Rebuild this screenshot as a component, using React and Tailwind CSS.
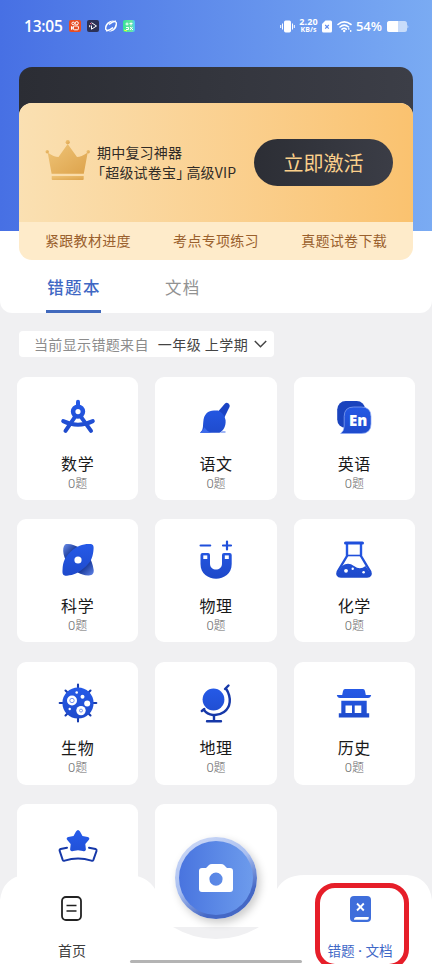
import React from "react";

const G = "url(#blue)";
const B = "#1f4fdb";
const N = "#1638a8";

const icons = {
  compass: (
    <g fill="none" stroke={G} strokeWidth="4" strokeLinecap="round" transform="translate(0 -1.7)">
      <path d="M20 9.500V14" />
      <circle cx="20" cy="19.300" r="4.900" strokeWidth="4.600" />
      <path d="M17 24.500L7.500 38.500M23 24.500L33 38.500" />
      <path d="M5.200 28.800Q20 36 34.800 28.800" />
    </g>
  ),
  brush: (
    <g transform="translate(0 1.2)">
      <path d="M24 37.500h5.500v-1.500h-3z" fill="#7f9df0" />
      <path d="M21 17.500l7.800-9q1.700-1.600 3.600-.3t1.200 3.300L28.500 22z" fill="#1a43c4" />
      <path d="M4 37.500C7.500 34.500 6.800 31 7.300 26.500C7.800 19 12 15.200 18 15.200h4Q28.500 18 29.600 25C30 31 27.500 35.500 23.500 37.500z" fill={G} />
      <path d="M4 37.500C6.500 35 7.500 34.500 8.500 32Q11 36.500 16 37.500z" fill="#3b69ec" />
    </g>
  ),
  english: (
    <g transform="translate(1.2 1)">
      <rect x="2" y="6" width="28" height="27" rx="8.500" fill="#1a43bd" />
      <path d="M5.500 38.500Q9 36 9 31V21.500Q9 12 18.500 12h7.500Q35.800 12 35.800 21.500v7.500Q35.800 38.500 26 38.500z" fill={G} stroke="#8eaaf5" strokeWidth=".7" />
      <text x="23" y="31.300" textAnchor="middle" fontSize="15" fontWeight="800" fill="#fff" className="font-['Open_Sans',sans-serif]">En</text>
    </g>
  ),
  science: (
    <g>
      <path d="M7 8.500C11 7 17 9 22 12C29 17 34 22 35.700 34C36 38 34 39.700 30 39.400C22 39 18 36 12 30C5 23 3.500 12 7 8.500z" fill="url(#deep)" />
      <path d="M31 8C35.700 7.700 36 10 35.400 15C34.500 23 32 27 26 32C20 37 16 39 9 39.700C5 40 4.200 38 4.500 34C5 25 7 21 13 15.500C19 10 24 8 31 8z" fill={G} />
      <circle cx="20" cy="24" r="3.600" fill="#fff" />
    </g>
  ),
  magnet: (
    <g>
      <path d="M4.600 9.500h9.600M31 5.500v8M27 9.500h8" stroke={B} strokeWidth="2.200" strokeLinecap="round" fill="none" />
      <path d="M4.500 19q0-2 2-2h5.500q2 0 2 2v8.500c0 8 12 8 12 0V19q0-2 2-2h5.700q2 0 2 2v9C35.700 47.500 4.500 47.500 4.500 28z" fill={G} />
      <rect x="7.300" y="19.400" width="4" height="3.600" fill="#fff" />
      <rect x="28.800" y="19.400" width="4" height="3.600" fill="#fff" />
    </g>
  ),
  flask: (
    <g>
      <path d="M13 8v12L3.800 35.500Q2.200 40 7 40.500h26Q37.800 40 36.200 35.500L27 20V8" fill="#fff" stroke={G} strokeWidth="2.400" />
      <path d="M11.500 7h17" stroke={B} strokeWidth="3" strokeLinecap="round" />
      <path d="M13 19.500h14" stroke={B} strokeWidth="1.600" />
      <path d="M8 30Q14 25.500 20 30T31.500 30L36 36.500Q37 41 33 41H7Q3 41 4 36.500z" fill={G} />
      <circle cx="12" cy="34.800" r="1.900" fill="#fff" />
      <circle cx="18.700" cy="32.800" r="1.200" fill="#fff" />
      <circle cx="29.600" cy="36.300" r="1.300" fill="#fff" />
    </g>
  ),
  cell: (
    <g>
      <path d="M20 5.500v37M1.700 24h36.600M7.500 11.500l25 25M32.500 11.500l-25 25" stroke="#173caf" strokeWidth="2.100" strokeLinecap="round" />
      <circle cx="20" cy="24" r="15.600" fill={G} />
      <circle cx="14" cy="21.500" r="5" fill="#fff" />
      <circle cx="14" cy="21.500" r="2.200" fill="#fff" stroke="#6689ed" strokeWidth=".9" />
      <circle cx="23" cy="31.600" r="4.700" fill="#fff" />
      <circle cx="23" cy="31.600" r="1.500" fill="#fff" stroke="#6689ed" strokeWidth=".9" />
      <circle cx="29.200" cy="24.500" r="3" fill="#fff" />
      <circle cx="24.500" cy="17.700" r="2" fill="#fff" />
      <circle cx="18.700" cy="13.500" r="1.300" fill="#fff" />
      <circle cx="11.700" cy="30" r="1.200" fill="#fff" />
    </g>
  ),
  globe: (
    <g>
      <circle cx="17.500" cy="20.500" r="10.900" fill={G} />
      <path d="M32.500 6.500L29 10M30 9.500C36 19 34.500 28.500 28 33C21 38 12 36.500 8 31M5.800 32L8.300 30M18 37v5M11 42.200h14" stroke={N} strokeWidth="2.400" strokeLinecap="round" fill="none" />
    </g>
  ),
  temple: (
    <g fill={G}>
      <path d="M11 10h18q1.500 0 2 2l.8 4h5.400q-.7 3-3.200 3H6q-2.500 0-3.200-3h5.400l.8-4q.5-2 2-2z" />
      <path d="M7.300 21.700h25.400v12.500h2.500V38.500H4.800v-4.300h2.500z" />
      <path d="M11.500 26.500h6.500v7.500h-6.500zM20.700 26.500h6.600v7.500h-6.600z" fill="#fff" />
    </g>
  ),
  star: (
    <g>
      <path d="M9 22.700L2.700 24Q1.200 24.500 1.700 26l3 8.800q.6 1.300 2 .8Q20 31.500 33.400 35.600q1.400.5 2-.8L38.500 26q.4-1.500-1-2L31 22.700" fill="none" stroke={N} strokeWidth="2" strokeLinecap="round" />
      <path d="M18 6.500q2-3 4 0l2.500 4.500 5.200 1q2.800 1 .8 3.300l-3.200 3.700.6 5.500q-.4 2.500-3 1.500L20 25.300 15.100 26q-2.600 1-3-1.500l.6-5.500-3.200-3.700q-2-2.300.8-3.300l5.200-1z" fill={G} />
    </g>
  ),
};

function Icon({ name }) {
  return (
    <svg viewBox="0 0 40 46" className="h-[46px] w-10 shrink-0 overflow-visible">
      <defs>
        <linearGradient id="blue" gradientUnits="userSpaceOnUse" x1="0" y1="6" x2="0" y2="42">
          <stop offset="0" stopColor="#265bea" />
          <stop offset="1" stopColor="#1e49c9" />
        </linearGradient>
        <linearGradient id="deep" x1="0" y1="0" x2="1" y2="1">
          <stop offset="0" stopColor="#6c8eea" />
          <stop offset=".3" stopColor="#163696" />
          <stop offset=".7" stopColor="#163696" />
          <stop offset="1" stopColor="#6185eb" />
        </linearGradient>
      </defs>
      {icons[name]}
    </svg>
  );
}

const subjects = [
  ["数学", "compass"],
  ["语文", "brush"],
  ["英语", "english"],
  ["科学", "science"],
  ["物理", "magnet"],
  ["化学", "flask"],
  ["生物", "cell"],
  ["地理", "globe"],
  ["历史", "temple"],
];

function Subject({ title, icon }) {
  return (
    <div className="flex h-[123px] flex-col items-center rounded-[9px] bg-white pt-[17px]">
      <Icon name={icon} />
      <div className="mt-[10.500px] text-[16px] leading-6 tracking-[0.6px] text-[#191919]">{title}</div>
      <div className="mt-[1px] text-[12px] leading-[14px] font-light text-[#686868]"><span className="font-['Roboto'] text-[13px]">0</span>题</div>
    </div>
  );
}

function StatusBar() {
  return (
    <div className="flex h-[52px] items-center justify-between pr-[23px] pl-6 text-white">
      <div className="flex items-center gap-[6px]">
        <span className="mr-px w-[38px] font-['Open_Sans',sans-serif] text-[15.500px] leading-5 font-semibold tracking-[-0.2px] whitespace-nowrap">13:05</span>
        <svg className="size-3" viewBox="0 0 12 12">
          <rect width="12" height="12" rx="2" fill="#e74e24" />
          <g fill="none" stroke="#fff" strokeWidth="1">
            <circle cx="4.200" cy="3.400" r="1.300" /><circle cx="7.700" cy="3.200" r="1.600" />
            <rect x="4.400" y="6" width="5" height="3.800" rx="1" /><path d="M2.500 6.500v3l2-1.500z" />
          </g>
        </svg>
        <svg className="size-3" viewBox="0 0 12 12">
          <rect width="12" height="12" rx="2" fill="#2b3157" />
          <path d="M4.500 2.700L9.500 6l-5 3.200V5.500M2.700 5.200v2" fill="none" stroke="#fff" strokeWidth="1" />
          <path d="M3 3.200l1.500 1" stroke="#ff6d9a" />
        </svg>
        <svg className="size-3" viewBox="0 0 12 12">
          <path fill="#fff" d="M0 8C0 3 5 0 9 .5 6 1.500 2.300 4 1.500 7.500 1 9 1.800 9.500 2.500 9.200 0 12 0 9 0 8zM12 4c0 5-4 8-8.500 7.500C7 10.500 9.800 8 10.500 4.500 11 3 10.500 2.500 9.700 2.800 12 .5 12 3 12 4z" />
          <path d="M11 1.200Q8 1 4 4.500M1 10.700Q4 11 8 7.500" stroke="#fff" strokeWidth="1.500" fill="none" />
        </svg>
        <svg className="size-3" viewBox="0 0 12 12">
          <defs><linearGradient id="app"><stop stopColor="#36e398" /><stop offset=".7" stopColor="#68e5a2" /><stop offset="1" stopColor="#4ac4ff" /></linearGradient></defs>
          <rect width="12" height="12" rx="2" fill="url(#app)" />
          <path d="M2.500 4h3M4 2.500v3M6.500 3.500h3M8 2.500v3M3 7.500h2.500v2H3M7 7l3 3M9.500 7L7 10" stroke="#fff" fill="none" />
          <path d="M1 10L4 11" stroke="#f0ff3a" />
        </svg>
      </div>
      <div className="flex items-center">
        <svg className="mr-[4px] h-[13px] w-[15px]" viewBox="0 0 15 13"><rect x="4" y=".5" width="7" height="12" rx="1.700" fill="#fff" /><path d="M2.500 3.500v6M.7 5v3M12.500 3.500v6M14.300 5v3" stroke="#fff" strokeWidth="1" /></svg>
        <div className="w-[19px] text-center font-['Open_Sans',sans-serif] leading-[8px] font-bold tracking-[0.1px] whitespace-nowrap"><div className="text-[9px]">2.20</div><div className="text-[7px]">KB/s</div></div>
        <svg className="ml-[4px] h-[13px] w-[10px]" viewBox="0 0 10 13"><path d="M3.500.5H8.500q1.500 0 1.500 1.500v9q0 1.500-1.500 1.500h-7Q0 12.500 0 11V4z" fill="#fff" /><path d="M3.200 5l3.600 3.700M6.800 5L3.200 8.700" stroke="#5e8aed" strokeWidth="1.200" /></svg>
        <svg className="ml-[5px] h-[13px] w-[15px]" viewBox="0 0 15 13"><path d="M1 4.500Q7 -.7 14 4.500M3 7Q7.200 3.400 11.500 7M5 9.200Q7.200 7.300 9.200 9.200" fill="none" stroke="#fff" strokeWidth="1.600" strokeLinecap="round" /><circle cx="7.200" cy="11" r="1.200" fill="#fff" /><path d="M11.800 8v1.700M13.700 10v2" stroke="#fff" strokeWidth="1.200" /></svg>
        <span className="ml-[4px] w-[28px] font-['Open_Sans',sans-serif] text-[13px] leading-5 font-semibold tracking-[-0.1px]">54%</span>
        <svg className="ml-[3px] h-[11px] w-[22px]" viewBox="0 0 22 11"><rect width="20" height="11" rx="2.500" fill="#fff" opacity=".6" /><path d="M20.500 3.500q1.500 2 0 4z" fill="#fff" opacity=".7" /><path d="M2.500 0H11v11H2.500Q0 11 0 8.500v-6Q0 0 2.500 0z" fill="#fff" /></svg>
      </div>
    </div>
  );
}

function VipCard() {
  return (
    <div className="mx-[19px] mt-[15px] rounded-[13px] bg-[linear-gradient(90deg,#2b2d34,#3c3e47)] bg-[length:100%_100px] bg-no-repeat pt-9">
      <div className="overflow-hidden rounded-[13px] bg-[#feebca]">
        <div className="flex h-[119px] items-center bg-gradient-to-r from-[#fae0b2] to-[#fac26f] pr-5 pl-[26px]">
          <svg className="mb-[6px] h-[44px] w-[46px] shrink-0" viewBox="0 0 46 44">
            <defs><linearGradient id="crown" x1="0" y1="0" x2="1" y2="1"><stop stopColor="#efc477" /><stop offset="1" stopColor="#dda34c" /></linearGradient></defs>
            <g fill="url(#crown)">
              <circle cx="22.700" cy="4.200" r="2.100" /><circle cx="2.200" cy="13.800" r="1.700" /><circle cx="43.200" cy="13.800" r="1.700" />
              <path d="M2.700 14.500Q9 19 13.500 19L22.700 6L32 19Q36 19 42.700 14.500L38.800 35.700H6.600z" />
              <path d="M6.700 38h32v3q0 1-1 1h-30q-1 0-1-1z" />
            </g>
          </svg>
          <div className="mb-[1px] ml-[6px] grow text-[14px] leading-[20px] tracking-[0.2px] whitespace-nowrap text-[#302b26]">
            <div>期中复习神器</div>
            <div className="-ml-[6px] flex"><span>「超级试卷宝」</span><span className="-ml-[4px]">高级VIP</span></div>
          </div>
          <button className="h-[47px] w-[139px] shrink-0 rounded-full bg-gradient-to-r from-[#2c2e35] to-[#3b3d46] text-[20px] text-[#fbd08b]">立即激活</button>
        </div>
        <div className="flex h-[38px] items-center justify-between px-[26px] pb-px text-[14px] tracking-[0.3px] text-[#9a602d]">
          <span>紧跟教材进度</span><span>考点专项练习</span><span>真题试卷下载</span>
        </div>
      </div>
    </div>
  );
}

function BottomNav() {
  return (
    <nav className="absolute inset-x-0 bottom-0 h-[89px]">
      <svg className="absolute inset-0 h-full w-full" viewBox="0 0 432 89">
        <path d="M0 89V25Q3 2 25 0H130Q147 1 155 14Q160 40 173 52A83 83 0 0 0 259 52Q272 40 277 14Q285 0 304 0H407Q429 2 432 25V89z" fill="#fff" />
      </svg>
      <div className="relative flex h-full justify-between">
        <div className="flex w-[143px] flex-col items-center pt-[21px]">
          <svg className="h-[25px] w-[21px]" viewBox="0 0 21 25"><rect x="1" y="1" width="19" height="23" rx="4" fill="none" stroke="#222" strokeWidth="1.800" /><path d="M5.500 9.500h10M5.500 15h10" stroke="#222" strokeWidth="1.600" /></svg>
          <span className="mt-[19px] pl-px text-[14px] leading-5 text-[#3c3c3c]">首页</span>
        </div>
        <div className="flex w-[144px] flex-col items-center pt-[21px]">
          <svg className="h-[26px] w-[21px]" viewBox="0 0 21 26"><rect width="21" height="26" rx="4" fill="#3f6edb" /><path d="M7 7.500l6.800 7M13.800 7.500L7 14.500" stroke="#fff" strokeWidth="1.800" /><path d="M4 23.800Q4 21 6.500 21H18.500v-.5q1 3-1.500 3.300z" fill="#fff" /></svg>
          <span className="mt-[18px] text-[13.600px] leading-5 whitespace-nowrap text-[#3f68c7]">错题<span className="font-['Roboto'] font-bold"> · </span>文档</span>
        </div>
      </div>
      <div className="absolute bottom-px left-[130px] h-[3px] w-[172px] rounded-full bg-[#b4b4b4]" />
      <div className="absolute top-[8px] left-[315px] h-[86px] w-[94px] rounded-[20px] border-[5px] border-[#e61e29]" />
      <div className="absolute -top-[38px] left-[175px] flex size-[82px] items-center justify-center rounded-full bg-[linear-gradient(150deg,#c5d3f5_15%,#a9bff0_45%,#4568c5_75%)] shadow-[3px_4px_8px_#00000035]">
        <div className="flex size-[74px] items-center justify-center rounded-full bg-gradient-to-r from-[#4974df] to-[#6d9bec]">
          <svg className="h-[30px] w-[36px]" viewBox="0 0 36 30"><path fillRule="evenodd" fill="#fff" d="M4 5H8L11 2Q12 1 14 1h9q2 0 3 1l3 3h3q3 0 3 3v18q0 3-3 3H4q-3 0-3-3V8q0-3 3-3zM18 9.500a6.600 6.600 0 1 0 0 13.200a6.600 6.600 0 1 0 0-13.200z" /></svg>
        </div>
      </div>
    </nav>
  );
}

export default function App() {
  return (
    <div className="relative h-[964px] w-[432px] overflow-hidden bg-[#f0f0f2] font-['Noto_Sans_CJK_SC',sans-serif]">
      <header className="h-[313px] rounded-b-[12px] bg-white bg-[linear-gradient(90deg,#4770e4,#7aabf3)] bg-[length:100%_231px] bg-no-repeat">
        <StatusBar />
        <VipCard />
        <div className="flex h-[53px] pl-[46px] text-[16.500px] tracking-[1.300px]">
          <div className="flex w-[55px] items-center justify-center border-b-[3px] border-[#4169bd] pt-[4px] pl-px font-medium whitespace-nowrap text-[#3f68c4]">错题本</div>
          <div className="ml-[64px] flex items-center border-b-[3px] border-transparent pt-[4px] text-[#929292]">文档</div>
        </div>
      </header>
      <div className="mt-[18px] ml-[19px] flex h-[26px] w-[255px] items-center rounded-[4px] bg-white pl-[15px] text-[14px] tracking-[0.350px] whitespace-nowrap">
        <span className="text-[#8c8c8c]">当前显示错题来自</span>
        <span className="ml-[9px] tracking-[0.450px] text-[#444]">一年级 上学期</span>
        <svg className="ml-[6px] h-[8px] w-[13px]" viewBox="0 0 13 8"><path d="M.8 1L6.500 6.700L12.200 1" fill="none" stroke="#444" strokeWidth="1.500" /></svg>
      </div>
      <main className="mt-5 grid grid-cols-3 gap-x-[17px] gap-y-[19.300px] px-[17px]">
        {subjects.map(([title, icon]) => <Subject key={title} title={title} icon={icon} />)}
        <div className="flex h-[123px] flex-col items-center rounded-[9px] bg-white pt-[21px]"><Icon name="star" /></div>
        <div className="h-[123px] rounded-[9px] bg-white" />
      </main>
      <BottomNav />
    </div>
  );
}
